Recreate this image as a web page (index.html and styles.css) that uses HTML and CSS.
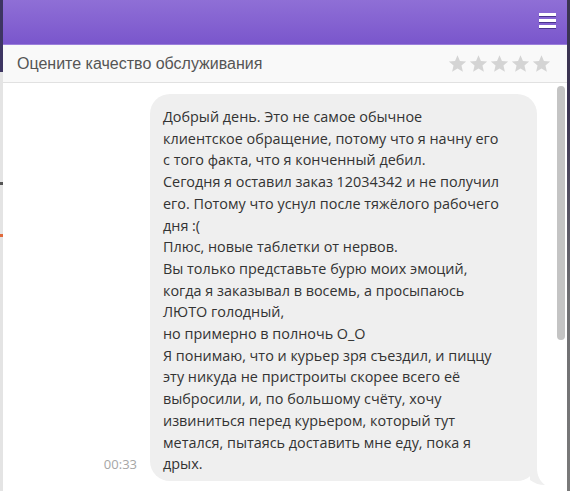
FILE: index.html
```html
<!DOCTYPE html>
<html lang="ru">
<head>
<meta charset="utf-8">
<title>Чат</title>
<link rel="stylesheet" href="styles.css">
</head>
<body>
<div class="frame">
  <div class="edge edge-left"><span class="mark mark-a"></span><span class="mark mark-b"></span></div>
  <div class="widget">
    <header class="topbar">
      <button class="menu" aria-label="Меню">
        <span class="bar"></span><span class="bar"></span><span class="bar"></span>
      </button>
    </header>
    <div class="rating">
      <span class="rating-label">Оцените качество обслуживания</span>
      <div class="stars">
        <svg class="star" viewBox="0 0 24 24" aria-hidden="true"><path d="M12 1.5l3.1 7.2 7.8.7-5.9 5.2 1.8 7.7L12 18.2l-6.8 4.1 1.8-7.7-5.9-5.2 7.8-.7z"/></svg>
        <svg class="star" viewBox="0 0 24 24" aria-hidden="true"><path d="M12 1.5l3.1 7.2 7.8.7-5.9 5.2 1.8 7.7L12 18.2l-6.8 4.1 1.8-7.7-5.9-5.2 7.8-.7z"/></svg>
        <svg class="star" viewBox="0 0 24 24" aria-hidden="true"><path d="M12 1.5l3.1 7.2 7.8.7-5.9 5.2 1.8 7.7L12 18.2l-6.8 4.1 1.8-7.7-5.9-5.2 7.8-.7z"/></svg>
        <svg class="star" viewBox="0 0 24 24" aria-hidden="true"><path d="M12 1.5l3.1 7.2 7.8.7-5.9 5.2 1.8 7.7L12 18.2l-6.8 4.1 1.8-7.7-5.9-5.2 7.8-.7z"/></svg>
        <svg class="star" viewBox="0 0 24 24" aria-hidden="true"><path d="M12 1.5l3.1 7.2 7.8.7-5.9 5.2 1.8 7.7L12 18.2l-6.8 4.1 1.8-7.7-5.9-5.2 7.8-.7z"/></svg>
      </div>
    </div>
    <div class="chat">
      <div class="messages">
        <div class="msg-row">
          <span class="time">00:33</span>
          <div class="bubble">
            <p class="text">Добрый день. Это не самое обычное<br>клиентское обращение, потому что я начну его<br>с того факта, что я конченный дебил.<br>Сегодня я оставил заказ 12034342 и не получил<br>его. Потому что уснул после тяжёлого рабочего<br>дня :(<br>Плюс, новые таблетки от нервов.<br>Вы только представьте бурю моих эмоций,<br>когда я заказывал в восемь, а просыпаюсь<br>ЛЮТО голодный,<br>но примерно в полночь О_О<br>Я понимаю, что и курьер зря съездил, и пиццу<br>эту никуда не пристроиты скорее всего её<br>выбросили, и, по большому счёту, хочу<br>извиниться перед курьером, который тут<br>метался, пытаясь доставить мне еду, пока я<br>дрых.</p>
            <svg class="tail" width="22" height="26" viewBox="0 0 22 26" aria-hidden="true">
              <path d="M0 0 L7 0 L7 8 C7 16 10 21 15 25 C9 25 4 23 0 20 Z" fill="#efefef"/>
            </svg>
          </div>
        </div>
      </div>
      <div class="scrollbar"><div class="thumb"></div></div>
    </div>
  </div>
  <div class="edge edge-right"></div>
</div>
</body>
</html>
```

FILE: styles.css
```css
html, body {
  margin: 0;
  padding: 0;
  height: 100%;
  overflow: hidden;
}
body {
  background: #ffffff;
  font-family: "Open Sans", "Noto Sans", sans-serif;
}
.frame {
  display: flex;
  height: 491px;
}
.edge {
  flex: 0 0 3px;
  position: relative;
}
.edge-left {
  background: linear-gradient(to bottom, #3d3562 0, #3d3562 72px, #e4e4e4 72px, #e4e4e4 100%);
}
.mark {
  position: absolute;
  left: 0;
  width: 3px;
  height: 3px;
}
.mark-a { top: 182px; background: #555; }
.mark-b { top: 234px; background: #e06a3c; }
.edge-right {
  background: linear-gradient(to bottom, #3b3452 0, #3b3452 110px, #6f6f72 300px, #7a7a7a 100%);
}
.widget {
  flex: 1;
  display: flex;
  flex-direction: column;
  background: #fff;
  min-width: 0;
}
.topbar {
  height: 44px;
  flex: 0 0 44px;
  background: linear-gradient(to bottom, #8f6fd6 0%, #7a56cc 100%);
  border-bottom: 1px solid #9b7fdb;
  display: flex;
  justify-content: flex-end;
  align-items: flex-start;
  padding-right: 11px;
}
.menu {
  margin-top: 13px;
  width: 17px;
  height: 17px;
  padding: 0;
  border: 0;
  background: transparent;
  display: flex;
  flex-direction: column;
  gap: 3px;
}
.bar {
  display: block;
  width: 17px;
  height: 3px;
  background: #ffffff;
  box-shadow: 0 1px 0 #4b3390;
}
.rating {
  height: 37px;
  flex: 0 0 37px;
  background: #f9f9f9;
  border-bottom: 1px solid #e1e1e1;
  display: flex;
  align-items: center;
  justify-content: space-between;
  padding: 0 16px 0 14px;
}
.rating-label {
  font-family: "Liberation Sans", Arial, sans-serif;
  font-size: 16px;
  color: #555555;
}
.stars {
  display: flex;
  gap: 2px;
}
.star {
  width: 19px;
  height: 19px;
  fill: #d4d4d4;
}
.chat {
  flex: 1;
  display: flex;
  min-height: 0;
}
.messages {
  flex: 1;
  padding: 11px 16px 0 0;
}
.msg-row {
  display: flex;
  justify-content: flex-end;
  align-items: flex-end;
  gap: 13px;
}
.time {
  font-size: 13px;
  color: #a6a6a6;
  line-height: 18px;
  margin-bottom: 8px;
}
.bubble {
  position: relative;
  width: 387px;
  box-sizing: border-box;
  background: #efefef;
  border-radius: 20px;
  padding: 12px 10px 6px 13px;
}
.text {
  margin: 0;
  font-size: 14.4px;
  line-height: 21.7px;
  color: #333333;
  white-space: nowrap;
}
.tail {
  position: absolute;
  right: -15px;
  bottom: -5px;
}
.scrollbar {
  flex: 0 0 14px;
  position: relative;
}
.thumb {
  margin: 3px 2px 0 4px;
  width: 8px;
  height: 254px;
  border-radius: 4px;
  background: #c4c4c4;
}
```
